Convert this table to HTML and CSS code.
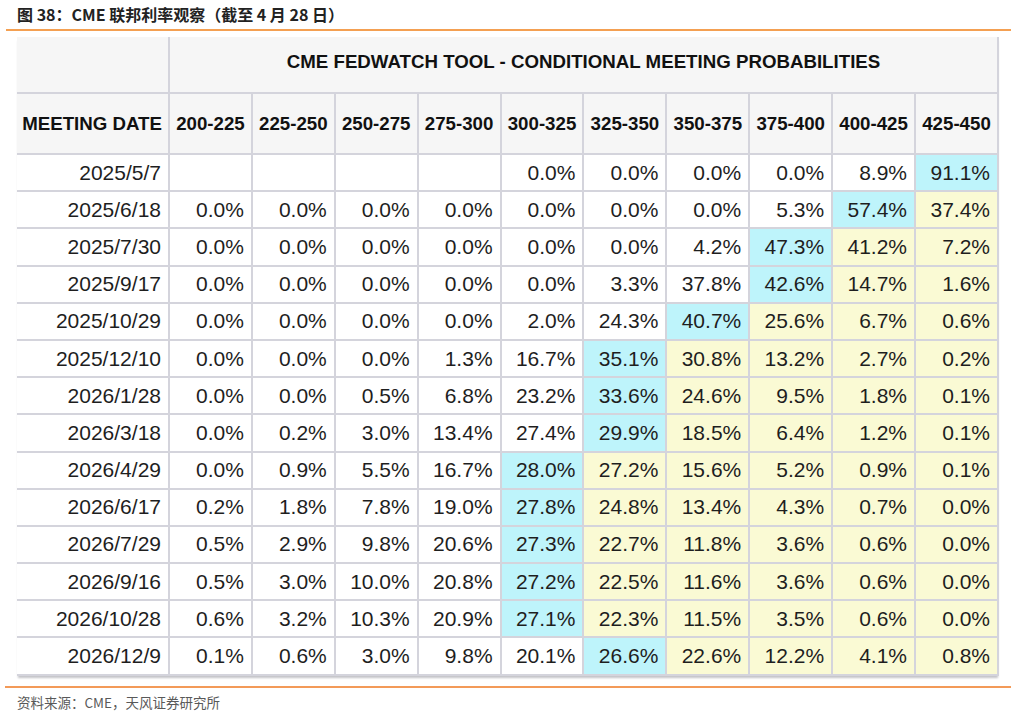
FILE: index.html
```html
<!DOCTYPE html>
<html lang="zh-CN">
<head>
<meta charset="utf-8">
<title>CME 联邦利率观察</title>
<link rel="stylesheet" href="styles.css">
</head>
<body>
<div class="page">
  <div class="title">图 38：CME 联邦利率观察（截至 4 月 28 日）</div>
  <div class="rule-top"></div>
  <div class="table-wrap">
    <table class="fw">
      <colgroup>
        <col class="col-date">
        <col><col><col><col><col><col><col><col><col><col>
      </colgroup>
      <thead>
        <tr class="h1">
          <th class="blank"></th>
          <th class="span" colspan="10">CME FEDWATCH TOOL - CONDITIONAL MEETING PROBABILITIES</th>
        </tr>
        <tr class="h2">
          <th class="md">MEETING DATE</th>
          <th>200-225</th><th>225-250</th><th>250-275</th><th>275-300</th><th>300-325</th>
          <th>325-350</th><th>350-375</th><th>375-400</th><th>400-425</th><th>425-450</th>
        </tr>
      </thead>
      <tbody>
        <tr><td>2025/5/7</td><td></td><td></td><td></td><td></td><td>0.0%</td><td>0.0%</td><td>0.0%</td><td>0.0%</td><td>8.9%</td><td class="c">91.1%</td></tr>
        <tr><td>2025/6/18</td><td>0.0%</td><td>0.0%</td><td>0.0%</td><td>0.0%</td><td>0.0%</td><td>0.0%</td><td>0.0%</td><td>5.3%</td><td class="c">57.4%</td><td class="y">37.4%</td></tr>
        <tr><td>2025/7/30</td><td>0.0%</td><td>0.0%</td><td>0.0%</td><td>0.0%</td><td>0.0%</td><td>0.0%</td><td>4.2%</td><td class="c">47.3%</td><td class="y">41.2%</td><td class="y">7.2%</td></tr>
        <tr><td>2025/9/17</td><td>0.0%</td><td>0.0%</td><td>0.0%</td><td>0.0%</td><td>0.0%</td><td>3.3%</td><td>37.8%</td><td class="c">42.6%</td><td class="y">14.7%</td><td class="y">1.6%</td></tr>
        <tr><td>2025/10/29</td><td>0.0%</td><td>0.0%</td><td>0.0%</td><td>0.0%</td><td>2.0%</td><td>24.3%</td><td class="c">40.7%</td><td class="y">25.6%</td><td class="y">6.7%</td><td class="y">0.6%</td></tr>
        <tr><td>2025/12/10</td><td>0.0%</td><td>0.0%</td><td>0.0%</td><td>1.3%</td><td>16.7%</td><td class="c">35.1%</td><td class="y">30.8%</td><td class="y">13.2%</td><td class="y">2.7%</td><td class="y">0.2%</td></tr>
        <tr><td>2026/1/28</td><td>0.0%</td><td>0.0%</td><td>0.5%</td><td>6.8%</td><td>23.2%</td><td class="c">33.6%</td><td class="y">24.6%</td><td class="y">9.5%</td><td class="y">1.8%</td><td class="y">0.1%</td></tr>
        <tr><td>2026/3/18</td><td>0.0%</td><td>0.2%</td><td>3.0%</td><td>13.4%</td><td>27.4%</td><td class="c">29.9%</td><td class="y">18.5%</td><td class="y">6.4%</td><td class="y">1.2%</td><td class="y">0.1%</td></tr>
        <tr><td>2026/4/29</td><td>0.0%</td><td>0.9%</td><td>5.5%</td><td>16.7%</td><td class="c">28.0%</td><td class="y">27.2%</td><td class="y">15.6%</td><td class="y">5.2%</td><td class="y">0.9%</td><td class="y">0.1%</td></tr>
        <tr><td>2026/6/17</td><td>0.2%</td><td>1.8%</td><td>7.8%</td><td>19.0%</td><td class="c">27.8%</td><td class="y">24.8%</td><td class="y">13.4%</td><td class="y">4.3%</td><td class="y">0.7%</td><td class="y">0.0%</td></tr>
        <tr><td>2026/7/29</td><td>0.5%</td><td>2.9%</td><td>9.8%</td><td>20.6%</td><td class="c">27.3%</td><td class="y">22.7%</td><td class="y">11.8%</td><td class="y">3.6%</td><td class="y">0.6%</td><td class="y">0.0%</td></tr>
        <tr><td>2026/9/16</td><td>0.5%</td><td>3.0%</td><td>10.0%</td><td>20.8%</td><td class="c">27.2%</td><td class="y">22.5%</td><td class="y">11.6%</td><td class="y">3.6%</td><td class="y">0.6%</td><td class="y">0.0%</td></tr>
        <tr><td>2026/10/28</td><td>0.6%</td><td>3.2%</td><td>10.3%</td><td>20.9%</td><td class="c">27.1%</td><td class="y">22.3%</td><td class="y">11.5%</td><td class="y">3.5%</td><td class="y">0.6%</td><td class="y">0.0%</td></tr>
        <tr><td>2026/12/9</td><td>0.1%</td><td>0.6%</td><td>3.0%</td><td>9.8%</td><td>20.1%</td><td class="c">26.6%</td><td class="y">22.6%</td><td class="y">12.2%</td><td class="y">4.1%</td><td class="y">0.8%</td></tr>
      </tbody>
    </table>
  </div>
  <div class="rule-bottom"></div>
  <div class="source">资料来源：CME，天风证券研究所</div>
</div>
</body>
</html>
```

FILE: styles.css
```css
html, body {
  margin: 0;
  padding: 0;
  background: #ffffff;
}

.page {
  width: 1017px;
  height: 715px;
  overflow: hidden;
}

.title {
  height: 29px;
  line-height: 29px;
  padding-left: 17px;
  font-family: "Noto Sans CJK SC", "Noto Sans", sans-serif;
  font-weight: 700;
  font-size: 16px;
  color: #222222;
  white-space: nowrap;
}

.rule-top {
  margin-left: 6px;
  width: 1005px;
  height: 2px;
  background: #f4a052;
}

.table-wrap {
  margin-top: 6px;
  margin-left: 17px;
  width: 982px;
}

.fw {
  width: 982px;
  table-layout: fixed;
  border-collapse: separate;
  border-spacing: 0;
  font-family: "Liberation Sans", Arial, sans-serif;
  box-shadow: 0 3px 2px -1px #c4c4c8;
}

.col-date {
  width: 153px;
}

.fw th,
.fw td {
  border-right: 2px solid #d4d4dc;
  border-bottom: 2px solid #d4d4dc;
  padding: 0;
  white-space: nowrap;
  overflow: hidden;
}

.fw th {
  background: #f6f6f6;
  font-weight: 700;
  font-size: 18.7px;
  color: #111111;
  text-align: center;
}

.fw .h1 {
  height: 57px;
}

.fw .h1 .span {
  padding-bottom: 6px;
}

.fw .h2 {
  height: 61px;
}

.fw .h2 .md {
  text-align: right;
  padding-right: 6px;
}

.fw tbody tr {
  height: 37.2px;
}

.fw td {
  font-size: 21px;
  color: #1e1e1e;
  text-align: right;
  padding-right: 7px;
  background: #ffffff;
}

.fw td.c {
  background: #bef4fb;
}

.fw td.y {
  background: #fafad4;
}

.rule-bottom {
  margin-top: 10px;
  margin-left: 5px;
  width: 1006px;
  height: 2px;
  background: #f39a58;
}

.source {
  padding-left: 17px;
  line-height: 28px;
  font-family: "Noto Sans CJK SC", "Noto Sans", sans-serif;
  font-size: 13.5px;
  color: #595959;
  white-space: nowrap;
}
```
